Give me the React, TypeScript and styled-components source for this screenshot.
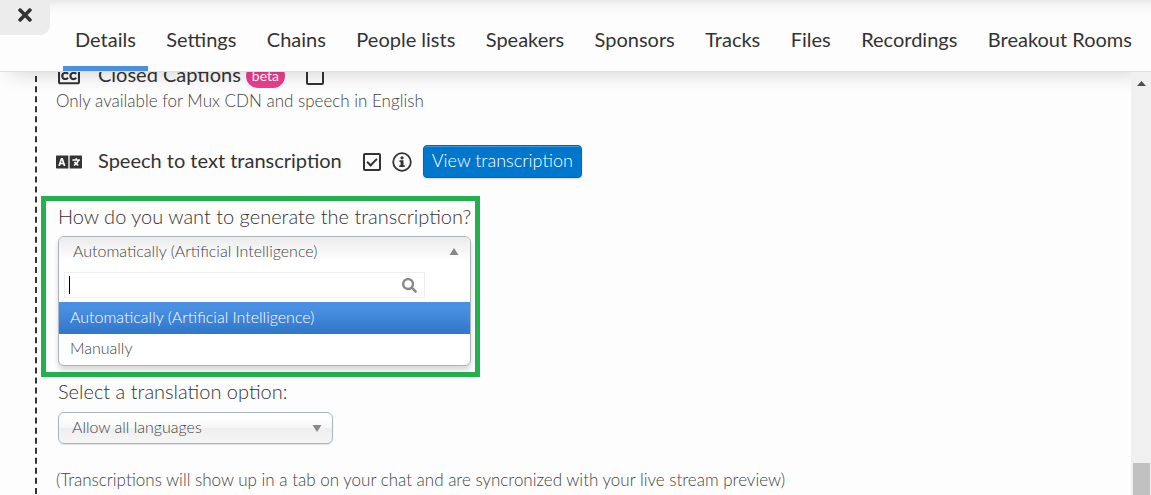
import React from "react";
import styled, { createGlobalStyle, css } from "styled-components";
import { FaLanguage, FaRegClosedCaptioning, FaSearch, FaTimes } from "react-icons/fa";

const GlobalStyle = createGlobalStyle`
  *, *::before, *::after { box-sizing: border-box; }
  body {
    margin: 0;
    background: #fdfdfd;
    color: #333;
    font-family: Lato, "Open Sans", sans-serif;
    font-size: 16px;
    line-height: 20px;
  }
  button, input, select { font: inherit; color: inherit; margin: 0; }
`;

const Page = styled.div`
  display: flex;
  flex-direction: column;
  height: 100vh;
  overflow: hidden;
`;

const Header = styled.header`
  position: relative;
  z-index: 1;
  display: flex;
  flex: none;
  align-items: flex-start;
  border-bottom: 1px solid #e0e0e0;
  background: linear-gradient(#e9e9e9, #f6f6f6 6px, #fdfdfd 14px);
  box-shadow: 0 12px 20px -10px rgba(0, 0, 0, 0.16);
`;

const CloseButton = styled.button`
  display: flex;
  flex: none;
  align-items: center;
  justify-content: center;
  width: 50px;
  height: 35px;
  padding: 0 0 6px;
  border: 0;
  border-bottom-right-radius: 10px;
  background: #ececec;
  cursor: pointer;
`;

const Tabs = styled.nav`
  display: flex;
  flex: 1;
  justify-content: space-between;
  margin: 0 7px 0 13px;
  white-space: nowrap;
`;

const Tab = styled.a<{ $active?: boolean }>`
  padding: 27px 12px 15px;
  border-bottom: 5px solid ${(p) => (p.$active ? "#4a90e2" : "transparent")};
  color: #333;
  font-size: 20px;
  line-height: 24px;
  text-decoration: none;
`;

const Viewport = styled.div`
  display: flex;
  flex: 1;
  min-height: 0;
`;

const Scroller = styled.main`
  flex: 1;
  min-width: 0;
  overflow: hidden;
  padding-left: 35px;
`;

const Panel = styled.section`
  margin-top: -16px;
  padding: 4px 0 24px 4px;
  border-left: 2px dashed #333;
`;

const Row = styled.div<{ $height: number; $gap?: number }>`
  display: flex;
  align-items: center;
  height: ${(p) => p.$height}px;
  margin-top: ${(p) => p.$gap || 0}px;
  padding-left: 15px;
`;

const IconSlot = styled.span`
  display: flex;
  justify-content: center;
  width: 26px;
  margin-right: 16px;
`;

const RowLabel = styled.label`
  padding-bottom: 3px;
  font-size: 20px;
  line-height: 24px;
`;

const Badge = styled.span`
  margin-left: 5px;
  padding: 0 6px;
  border-radius: 12px;
  background: #e83e8c;
  color: #fff;
  font-size: 14px;
  line-height: 24px;
`;

const Checkbox = styled.input`
  position: relative;
  appearance: none;
  width: 18px;
  height: 18px;
  margin-left: 21px;
  border: 2px solid #333;
  border-radius: 2px;

  &:checked::after {
    content: "";
    position: absolute;
    top: 1px;
    left: 4px;
    width: 6px;
    height: 10px;
    border: solid #333;
    border-width: 0 2px 2px 0;
    transform: rotate(45deg);
  }
`;

const InfoButton = styled.button`
  display: flex;
  margin-left: 11px;
  padding: 0;
  border: 0;
  background: none;
`;

const PrimaryButton = styled.button`
  height: 33px;
  margin-left: 11px;
  padding: 0 8px 3px;
  border: 1px solid #0067b0;
  border-radius: 4px;
  background: #0077cc;
  box-shadow: inset 0 1px 0 rgba(255, 255, 255, 0.25), 0 1px 2px rgba(0, 0, 0, 0.15);
  color: #fff;
  font-size: 18px;
  font-weight: 300;
  line-height: 24px;
  cursor: pointer;
`;

const Note = styled.p<{ $gap?: number }>`
  margin: ${(p) => p.$gap || 0}px 0 0;
  padding-left: 15px;
  color: #444;
  font-size: 17px;
  font-weight: 300;
`;

const Highlight = styled.div`
  width: fit-content;
  margin-top: 18px;
  padding: 3px 4px 6px 12px;
  border: 5px solid #22b14c;
`;

const FieldLabel = styled.label`
  display: block;
  font-size: 20px;
  font-weight: 300;
  line-height: 24px;
`;

const frame = css`
  border: 1px solid #aab4be;
  border-radius: 6px;
  color: #444;
  font-weight: 300;
`;

const Dropdown = styled.div`
  ${frame}
  margin-top: 8px;
  overflow: hidden;
  background: #fff;
  box-shadow: 0 4px 5px rgba(0, 0, 0, 0.15);
`;

const Trigger = styled.button`
  display: flex;
  align-items: center;
  justify-content: space-between;
  width: 100%;
  height: 30px;
  padding: 0 11px 2px 14px;
  border: 0;
  background: linear-gradient(#ebebeb, #fff 80%);
`;

const SearchBox = styled.div`
  display: flex;
  align-items: center;
  height: 26px;
  margin: 5px 45px 4px 5px;
  padding: 0 7px 0 4px;
  border: 1px solid #eee;
`;

const Caret = styled.span`
  width: 1px;
  height: 18px;
  background: #000;
`;

const SearchInput = styled.input`
  flex: 1;
  min-width: 0;
  padding: 0;
  border: 0;
  outline: 0;
  background: none;
`;

const Options = styled.ul`
  margin: 0;
  padding: 0;
  list-style: none;
`;

const Option = styled.li<{ $selected?: boolean }>`
  padding: 4px 11px 7px;
  ${(p) =>
    p.$selected &&
    css`
      padding: 5px 11px 7px;
      background: linear-gradient(#4a90e2 20%, #3279cc 90%);
      color: #fff;
    `}
`;

const Field = styled.div`
  margin-top: 2px;
  padding-left: 17px;
`;

const SelectWrap = styled.div`
  display: grid;
  align-items: center;
  width: 275px;
  margin-top: 9px;

  > * { grid-area: 1 / 1; }
  > svg { justify-self: end; margin-right: 11px; pointer-events: none; }
`;

const Select = styled.select`
  ${frame}
  appearance: none;
  width: 100%;
  height: 32px;
  padding: 0 30px 2px 13px;
  background: linear-gradient(#fff 20%, #f6f6f6 50%, #eeeeee 52%, #f6f6f6);
  box-shadow: 0 1px 1px rgba(0, 0, 0, 0.1);
`;

const ScrollTrack = styled.div`
  position: relative;
  z-index: 2;
  display: flex;
  flex: none;
  flex-direction: column;
  justify-content: space-between;
  align-items: center;
  width: 20px;
  padding-top: 9px;
  background: #f0f0f0;
`;

const ScrollThumb = styled.div`
  width: 17px;
  height: 32px;
  background: #c1c1c1;
`;

const Arrow = ({ down, color = "#888" }: { down?: boolean; color?: string }) => (
  <svg width="10" height="7" viewBox="0 0 10 7" fill={color} aria-hidden="true">
    <path d={down ? "M0.5 0h9L5 7z" : "M0.5 7h9L5 0z"} />
  </svg>
);

const ScrollArrow = () => (
  <svg width="9" height="5" viewBox="0 0 9 5" fill="#505050" aria-hidden="true">
    <path d="M0 5h9L4.5 0z" />
  </svg>
);

const InfoIcon = () => (
  <svg width="20" height="20" viewBox="0 0 20 20" aria-hidden="true">
    <circle cx="10" cy="10" r="8.8" fill="none" stroke="#333" strokeWidth="1.8" />
    <circle cx="10" cy="5.8" r="1.6" fill="#333" />
    <path d="M7.5 8.3h4v5h1.2V15H7.3v-1.7h1.3V10H7.5z" fill="#333" />
  </svg>
);

const tabs = [
  "Details", "Settings", "Chains", "People lists", "Speakers",
  "Sponsors", "Tracks", "Files", "Recordings", "Breakout Rooms",
];

export default function App() {
  return (
    <Page>
      <GlobalStyle />
      <Header>
        <CloseButton aria-label="Close"><FaTimes size={20} /></CloseButton>
        <Tabs>
          {tabs.map((name, i) => (
            <Tab key={name} href="#" $active={i === 0}>{name}</Tab>
          ))}
        </Tabs>
      </Header>
      <Viewport>
        <Scroller>
          <Panel>
            <Row $height={31}>
              <IconSlot><FaRegClosedCaptioning size={22} /></IconSlot>
              <RowLabel htmlFor="captions">Closed Captions</RowLabel>
              <Badge>beta</Badge>
              <Checkbox type="checkbox" id="captions" />
            </Row>
            <Note>Only available for Mux CDN and speech in English</Note>
            <Row $height={33} $gap={34}>
              <IconSlot><FaLanguage size={26} /></IconSlot>
              <RowLabel htmlFor="speech">Speech to text transcription</RowLabel>
              <Checkbox type="checkbox" id="speech" defaultChecked />
              <InfoButton aria-label="Information"><InfoIcon /></InfoButton>
              <PrimaryButton>View transcription</PrimaryButton>
            </Row>
            <Highlight>
              <FieldLabel htmlFor="mode">How do you want to generate the transcription?</FieldLabel>
              <Dropdown>
                <Trigger id="mode" aria-haspopup="listbox" aria-expanded="true">
                  Automatically (Artificial Intelligence)
                  <Arrow />
                </Trigger>
                <SearchBox>
                  <Caret />
                  <SearchInput type="text" aria-label="Search options" />
                  <FaSearch size={15} color="#888" />
                </SearchBox>
                <Options role="listbox">
                  <Option role="option" aria-selected="true" $selected>
                    Automatically (Artificial Intelligence)
                  </Option>
                  <Option role="option" aria-selected="false">Manually</Option>
                </Options>
              </Dropdown>
            </Highlight>
            <Field>
              <FieldLabel htmlFor="translation">Select a translation option:</FieldLabel>
              <SelectWrap>
                <Select id="translation"><option>Allow all languages</option></Select>
                <Arrow down />
              </SelectWrap>
            </Field>
            <Note $gap={26}>
              (Transcriptions will show up in a tab on your chat and are syncronized with your live stream preview)
            </Note>
          </Panel>
        </Scroller>
        <ScrollTrack aria-hidden="true">
          <ScrollArrow />
          <ScrollThumb />
        </ScrollTrack>
      </Viewport>
    </Page>
  );
}
